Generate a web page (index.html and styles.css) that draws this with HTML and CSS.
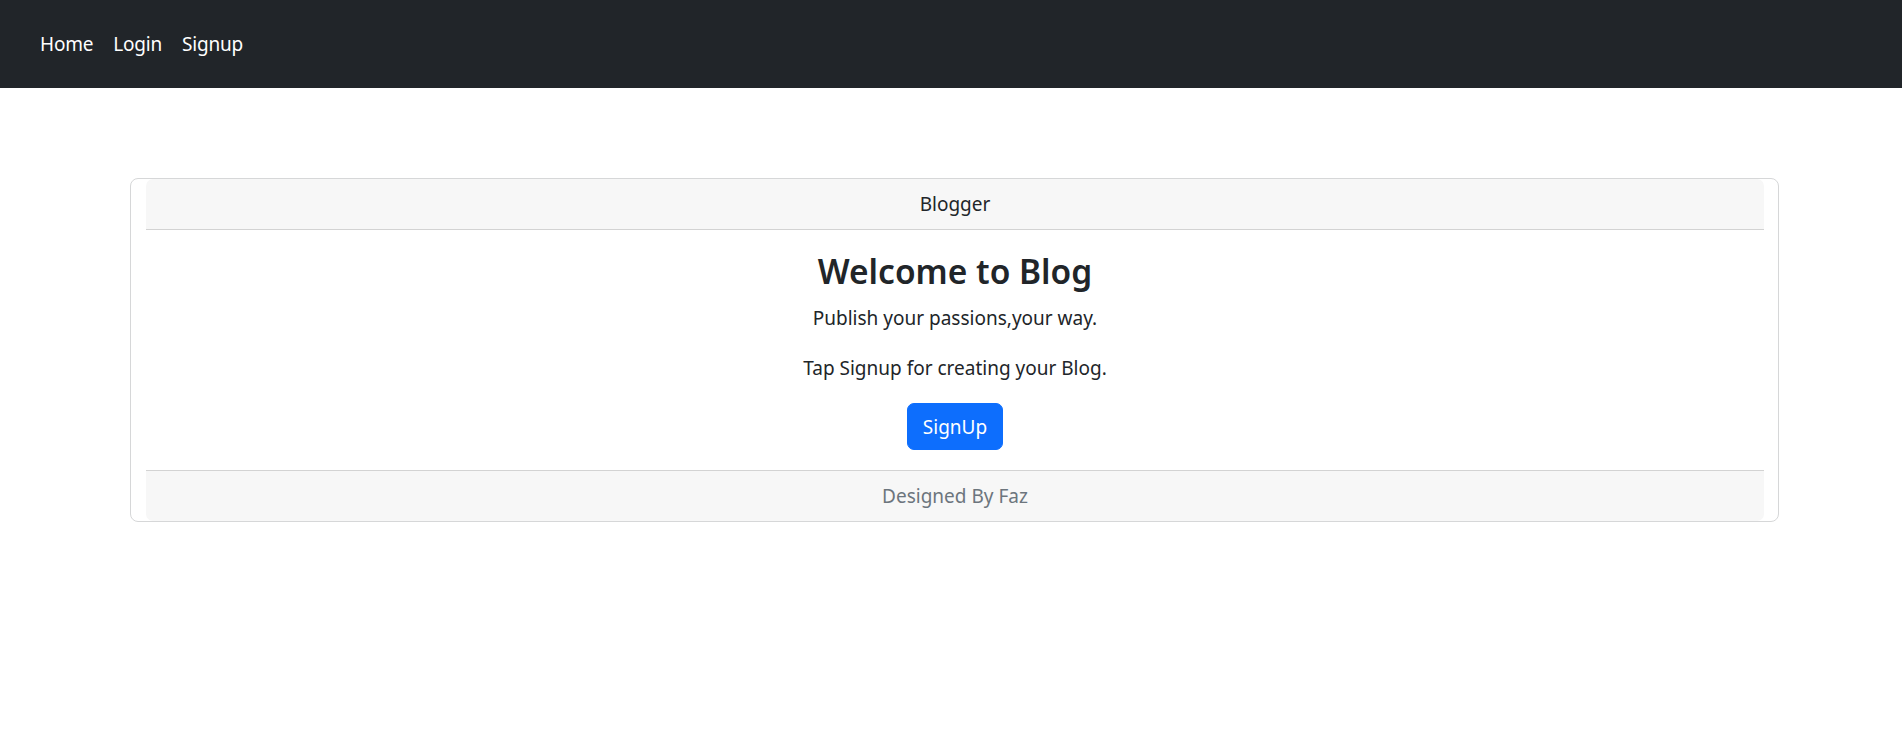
FILE: index.html
```html
<!DOCTYPE html>
<html lang="en">
<head>
<meta charset="utf-8">
<title>Blogger</title>
<link rel="stylesheet" href="styles.css">
</head>
<body>
<nav class="navbar">
  <ul class="nav">
    <li><a class="nav-link" href="#">Home</a></li>
    <li><a class="nav-link" href="#">Login</a></li>
    <li><a class="nav-link" href="#">Signup</a></li>
  </ul>
</nav>
<main class="page">
  <div class="card">
    <div class="card-inner">
      <div class="card-header">Blogger</div>
      <div class="card-body">
        <h3 class="title">Welcome to Blog</h3>
        <p class="text">Publish your passions,your way.</p>
        <p class="text">Tap Signup for creating your Blog.</p>
        <a class="btn" href="#">SignUp</a>
      </div>
      <div class="card-footer">Designed By Faz</div>
    </div>
  </div>
</main>
</body>
</html>
```
FILE: styles.css
```css
* { box-sizing: border-box; }
html, body { margin: 0; padding: 0; }
body {
  font-family: "Noto Sans", "Open Sans", sans-serif;
  font-size: 19px;
  line-height: 30px;
  color: #212529;
  background: #fff;
}
.navbar {
  background: #212529;
  height: 88px;
  display: flex;
  align-items: center;
  padding: 0 20px 0 30px;
}
.nav {
  list-style: none;
  margin: 0;
  padding: 0;
  display: flex;
}
.nav-link {
  display: block;
  padding: 10px 10px;
  color: #fff;
  text-decoration: none;
  letter-spacing: -0.2px;
}
.page {
  padding: 90px 123px 0 130px;
}
.card {
  border: 1px solid #d6d7d8;
  border-radius: 8px;
}
.card-inner {
  padding: 0 14px 0 15px;
}
.card-header {
  background: #f7f7f7;
  border-bottom: 1px solid #d3d3d3;
  border-radius: 7px 7px 0 0;
  padding: 10px 20px;
  text-align: center;
}
.card-body {
  padding: 20px;
  text-align: center;
}
.title {
  margin: 0 0 10px;
  font-size: 33.5px;
  line-height: 43px;
  font-weight: 600;
}
.text {
  margin: 0 0 20px;
}
.btn {
  display: inline-block;
  background: #0d6efd;
  color: #fff;
  text-decoration: none;
  border: 1px solid #0d6efd;
  border-radius: 7px;
  padding: 7.5px 15px;
  line-height: 30px;
  vertical-align: top;
}
.card-footer {
  background: #f7f7f7;
  border-top: 1px solid #d3d3d3;
  border-radius: 0 0 7px 7px;
  padding: 10px 20px;
  text-align: center;
  color: #6c757d;
}
```
